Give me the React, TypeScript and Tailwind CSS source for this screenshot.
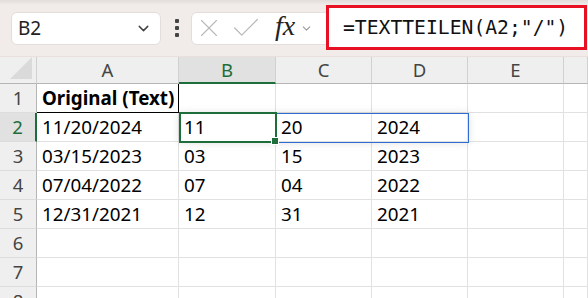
import { ChevronDown, X, Check } from 'lucide-react';

const cols = ['A', 'B', 'C', 'D', 'E', ''];
const rows: string[][] = [
  ['Original (Text)', '', '', '', '', ''],
  ['11/20/2024', '11', '20', '2024', '', ''],
  ['03/15/2023', '03', '15', '2023', '', ''],
  ['07/04/2022', '07', '04', '2022', '', ''],
  ['12/31/2021', '12', '31', '2021', '', ''],
  ['', '', '', '', '', ''],
  ['', '', '', '', '', ''],
  ['', '', '', '', '', ''],
];

const cellFont = { fontFamily: '"Noto Sans", "Open Sans", sans-serif' };

export default function App() {
  return (
    <div className="w-[588px] h-[298px] overflow-hidden bg-white relative" style={cellFont}>
      {/* formula bar */}
      <div className="h-[56px] bg-[#f1ecea] flex items-center relative">
        <div className="absolute top-0 left-0 right-0 h-[5px] bg-gradient-to-b from-[#e2dcda] to-[#f1ecea]" />
        <div className="ml-[11px] w-[150px] h-[33px] bg-white rounded-[6px] border border-[#e3dedc] flex items-center pl-[6px] pr-[8px]">
          <span className="text-[19px] text-[#222] flex-1 leading-none">B2</span>
          <ChevronDown className="w-[17px] h-[17px] text-[#444]" strokeWidth={2} />
        </div>
        <div className="ml-[14px] flex flex-col gap-[3px]">
          <span className="w-[4px] h-[4px] bg-[#444] rounded-[1px]" />
          <span className="w-[4px] h-[4px] bg-[#444] rounded-[1px]" />
          <span className="w-[4px] h-[4px] bg-[#444] rounded-[1px]" />
        </div>
        <div className="ml-[12px] w-[140px] h-[33px] bg-white rounded-l-[6px] border border-[#e3dedc] flex items-center pl-0">
          <X className="ml-[2px] w-[30px] h-[30px] text-[#b9b9b9]" strokeWidth={0.9} />
          <Check className="ml-[5px] w-[34px] h-[34px] text-[#b9b9b9]" strokeWidth={0.9} />
          <span
            className="ml-[12px] text-[28px] italic text-[#222] leading-none -mt-[4px]"
            style={{ fontFamily: '"Liberation Serif", serif' }}
          >
            fx
          </span>
          <ChevronDown className="ml-[5px] w-[13px] h-[13px] text-[#999]" strokeWidth={2} />
        </div>
        <div className="absolute left-[326px] top-[5px] w-[261px] h-[45px] bg-white border-[3px] border-[#e81123] flex items-center pl-[14px]">
          <span
            className="text-[19.7px] text-[#111] leading-none"
            style={{ fontFamily: '"DejaVu Sans Mono", "Liberation Mono", monospace' }}
          >
            =TEXTTEILEN(A2;"/")
          </span>
        </div>
      </div>
      <div className="h-[1px] bg-[#e9dfdc]" />

      {/* grid */}
      <div className="relative grid grid-cols-[37px_142px_97px_96px_96px_96px_1fr] auto-rows-[29px] grid-rows-[27px]">
        {/* header row */}
        <div className="bg-[#efefef] border-r border-b border-[#d0d0d0] border-b-[#b5b5b5] relative">
          <div
            className="absolute right-[4px] bottom-[4px] w-[22px] h-[22px] bg-[#dadada]"
            style={{ clipPath: 'polygon(100% 0, 100% 100%, 0 100%)' }}
          />
        </div>
        {cols.map((c) =>
          c === 'B' ? (
            <div
              key={c}
              className="bg-[#e1e1e1] border-r border-[#d0d0d0] border-b-2 border-b-[#1e6e3c] flex items-center justify-center text-[18.5px] text-[#1e6e3c]"
            >
              {c}
            </div>
          ) : (
            <div
              key={c || 'x'}
              className="bg-[#efefef] border-r border-[#d0d0d0] border-b border-b-[#b5b5b5] flex items-center justify-center text-[18.5px] text-[#444]"
            >
              {c}
            </div>
          )
        )}

        {rows.map((r, ri) => (
          <RowCells key={ri} cells={r} index={ri + 1} />
        ))}

        {/* spill range outline */}
        <div className="absolute left-[179px] top-[56px] w-[290px] h-[30px] border border-[#2f6bd0] shadow-[0_0_8px_rgba(0,0,0,0.12)] pointer-events-none" />
        {/* active cell */}
        <div className="absolute left-[179px] top-[55px] w-[98px] h-[31px] border-2 border-[#1e6e3c] pointer-events-none">
          <span className="absolute -right-[4px] -bottom-[4px] w-[6px] h-[6px] bg-[#1e6e3c] border border-white box-content" />
        </div>
      </div>
    </div>
  );
}

function RowCells({ cells, index }: { cells: string[]; index: number }) {
  const active = index === 2;
  return (
    <>
      <div
        className={`flex items-center justify-center text-[18.5px] border-b border-[#dcdcdc] ${
          active
            ? 'bg-[#e1e1e1] text-[#1e6e3c] border-r-2 border-r-[#1e6e3c]'
            : 'bg-[#efefef] text-[#444] border-r border-r-[#b5b5b5]'
        }`}
      >
        {index}
      </div>
      {cells.map((v, ci) => {
        const isA1 = index === 1 && ci === 0;
        return (
          <div
            key={ci}
            className={`flex items-center pl-[5px] text-[18.8px] text-black whitespace-nowrap ${
              isA1
                ? 'font-bold border-r border-b border-black pl-[4px]'
                : 'border-r border-b border-[#e1e1e1]'
            }`}
          >
            {v}
          </div>
        );
      })}
    </>
  );
}
